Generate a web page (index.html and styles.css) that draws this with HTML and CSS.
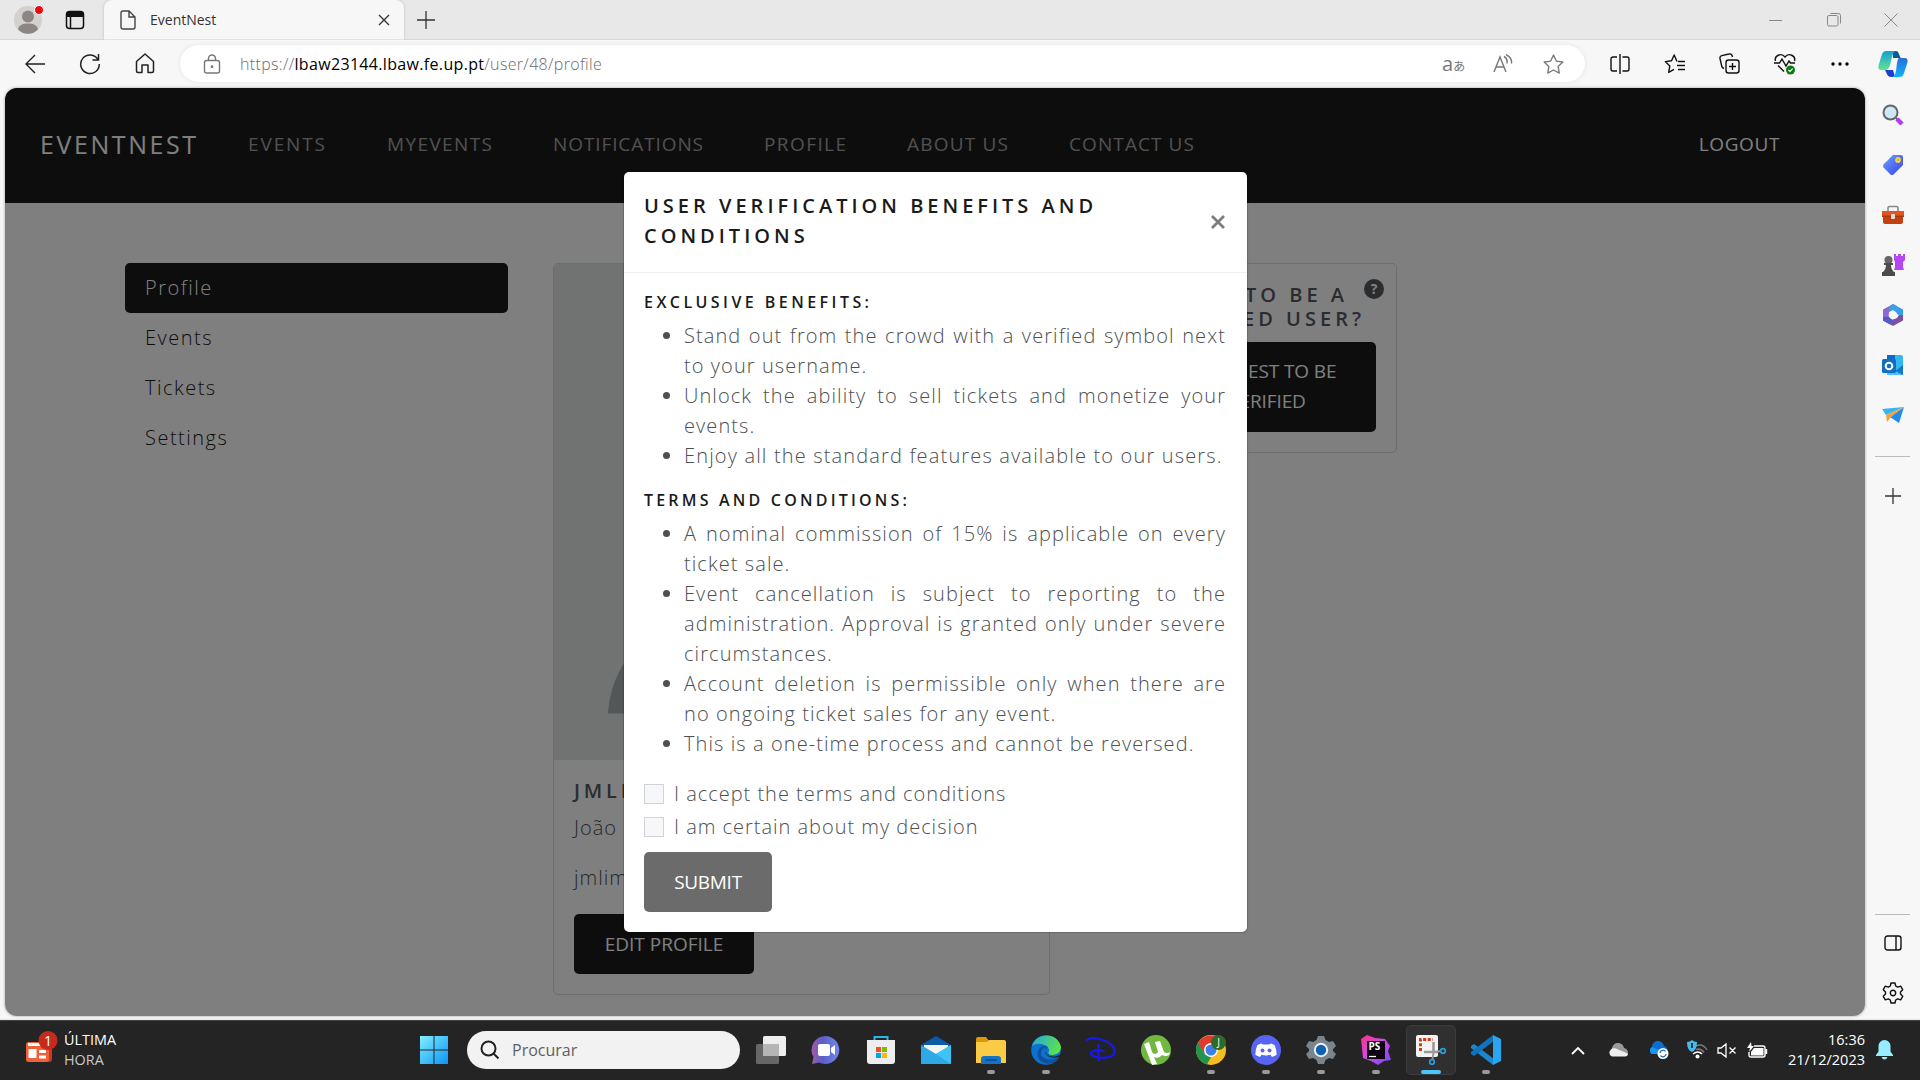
FILE: index.html
```html
<!DOCTYPE html>
<html lang="pt">
<head>
<meta charset="utf-8">
<title>EventNest</title>
<link rel="stylesheet" href="styles.css">
</head>
<body>
<div class="browser">
  <header class="tabstrip">
    <div class="avatar-cell"><svg width="30" height="30" viewBox="0 0 30 30"><circle cx="15" cy="15" r="14" fill="#d3d1cd"/><circle cx="15" cy="11.500" r="6" fill="#8b8683"/><path d="M5 24.500c1-5 5-6 10-6s9 1 10 6a14 14 0 0 1-20 0z" fill="#8b8683"/><circle cx="26" cy="5" r="4.500" fill="#e80b12" stroke="#fff"/></svg></div>
    <svg class="workspace" width="20" height="20" viewBox="0 0 20 20" fill="none" stroke="#111" stroke-width="1.500"><rect x="1.500" y="1.500" width="17" height="17" rx="3"/><path d="M2 4.500h16" stroke-width="5"/><path d="M5.500 6v12"/></svg>
    <div class="tab">
      <svg width="16" height="20" viewBox="0 0 16 20" fill="none" stroke="#444" stroke-width="1.400"><path d="M3 1h6l6 6v10a2 2 0 0 1-2 2H3a2 2 0 0 1-2-2V3a2 2 0 0 1 2-2zM9 1v6h6"/></svg>
      <span class="tab-title">EventNest</span>
      <svg width="12" height="12" viewBox="0 0 12 12" stroke="#333" stroke-width="1.400"><path d="M1 1l10 10M11 1L1 11"/></svg>
    </div>
    <svg class="newtab" width="18" height="18" viewBox="0 0 18 18" stroke="#333" stroke-width="1.300"><path d="M9 0v18M0 9h18"/></svg>
    <div class="winctl">
      <svg width="14" height="14" viewBox="0 0 14 14" stroke="#888"><path d="M0 7.500h13"/></svg>
      <svg width="14" height="14" viewBox="0 0 14 14" fill="none" stroke="#888"><rect x=".5" y="2.500" width="10.500" height="10.500" rx="1.500"/><path d="M3.500.5h8a2 2 0 0 1 2 2v8"/></svg>
      <svg width="14" height="14" viewBox="0 0 14 14" stroke="#888"><path d="M.5.500l13 13M13.500.500l-13 13"/></svg>
    </div>
  </header>

  <div class="toolbar">
    <div class="tool"><svg width="20" height="20" viewBox="0 0 20 20" fill="none" stroke="#222" stroke-width="1.400"><path d="M20 10H1M10 1l-9 9 9 9"/></svg></div>
    <div class="tool"><svg width="22" height="22" viewBox="0 0 22 22" fill="none" stroke="#222" stroke-width="1.500"><path d="M19 6.500A9.300 9.300 0 1 0 20.300 11M19.500 1v6h-6"/></svg></div>
    <div class="tool"><svg width="20" height="21" viewBox="0 0 20 21" fill="none" stroke="#222" stroke-width="1.500" stroke-linejoin="round"><path d="M1.500 8.500L10 1l8.500 7.500V18a1.500 1.500 0 0 1-1.500 1.500h-4V12H7v7.500H3A1.500 1.500 0 0 1 1.500 18z"/></svg></div>
    <div class="address">
      <svg width="18" height="20" viewBox="0 0 18 20" fill="none" stroke="#777" stroke-width="1.400"><rect x="1.500" y="6.500" width="15" height="12.500" rx="2"/><path d="M5.500 6.500V4.500a3.500 3.500 0 0 1 7 0v2"/><circle cx="9" cy="12.700" r=".7" fill="#777"/></svg>
      <span class="url">https://<b>lbaw23144.lbaw.fe.up.pt</b>/user/48/profile</span>
      <div class="addr-tools">
        <span class="translate">a<i>あ</i></span>
        <svg width="20" height="20" viewBox="0 0 20 20" fill="none" stroke="#777" stroke-width="1.400"><path d="M1 18L7 3l6 15M3.200 13h7.600M11 2.500c2 1 3.500 4 3 7M13 .5c4 2 6 5 5.500 9"/></svg>
        <svg width="21" height="20" viewBox="0 0 20 19" fill="none" stroke="#777" stroke-width="1.300" stroke-linejoin="round"><path d="M10 1l2.700 5.700 6.200.9-4.500 4.300 1.100 6.200L10 15.200l-5.500 2.900 1.100-6.200L1.100 7.600l6.200-.9z"/></svg>
      </div>
    </div>
    <div class="right-tools">
      <div class="tool"><svg width="20" height="20" viewBox="0 0 20 20" fill="none" stroke="#111" stroke-width="1.400"><path d="M10 0v20M7 3H3a2 2 0 0 0-2 2v10a2 2 0 0 0 2 2h4M12.500 3H17a2 2 0 0 1 2 2v10a2 2 0 0 1-2 2h-4.500"/></svg></div>
      <div class="tool"><svg width="21" height="20" viewBox="0 0 21 20" fill="none" stroke="#111" stroke-width="1.400" stroke-linejoin="round"><path d="M13 7.500L10.200 1 7.500 6.700 1.300 7.600l4.500 4.300-1.100 6.500 5.300-3M14 7.500h7M13 11.500h8M14 15.500h7"/></svg></div>
      <div class="tool"><svg width="21" height="21" viewBox="0 0 21 21" fill="none" stroke="#111" stroke-width="1.400"><rect x="7" y="7" width="13" height="13" rx="2.500"/><path d="M13.500 10v7M10 13.500h7M5 15.500c-1-.3-2-1-2.300-2.500L1 5.500C.7 4 1.500 3 2.800 2.600L10 1c2-.5 3 .5 3.500 3"/></svg></div>
      <div class="tool"><svg width="22" height="22" viewBox="0 0 22 22" fill="none" stroke="#111" stroke-width="1.400"><path d="M1.500 8C0 3 7-1 11 4c4-5 11-1 9.500 4M0 10h5.500l2.500-4 4 7 3-5 1.500 2H21M4 12.500l6 6"/><circle cx="16.500" cy="17" r="4.500" fill="#0f7b0f" stroke="none"/><path d="M14.500 17l1.500 1.500 2.600-2.800" stroke="#fff" stroke-width="1.200"/></svg></div>
      <div class="tool"><svg width="18" height="6" viewBox="0 0 18 6"><circle cx="2" cy="3" r="1.700"/><circle cx="9" cy="3" r="1.700"/><circle cx="16" cy="3" r="1.700"/></svg></div>
    </div>
    <div class="copilot"><svg width="30" height="28" viewBox="0 0 30 28"><defs><linearGradient id="cp1" x1="0" y1="0" x2="0" y2="1"><stop offset="0" stop-color="#159fd8"/><stop offset="1" stop-color="#62e38e"/></linearGradient><linearGradient id="cp2" x1="0" y1="0" x2="0" y2="1"><stop offset="0" stop-color="#2b6fd8"/><stop offset="1" stop-color="#0fb3fa"/></linearGradient></defs><path d="M15 1h3c3 0 3 5 5 7h-8z" fill="#0a5c8c"/><path d="M7 20h8l2 7h-4c-4 0-4-4-6-7z" fill="#1b3fd0"/><path d="M8 1h10c-2 0-3 2-4 6l-2 8c-1 4-3 5-5 5H3c-3 0-3-3-2-6L4 4c1-2 2-3 4-3z" fill="url(#cp1)"/><path d="M22 8h5c3 0 3 3 2 6l-3 9c-1 3-2 4-5 4h-8c3 0 4-2 5-6l1-8c1-4 1-5 3-5z" fill="url(#cp2)"/></svg></div>
  </div>

  <div class="content">
    <div class="page">
      <nav class="navbar">
        <span class="brand">EVENTNEST</span>
        <a class="n1">EVENTS</a><a class="n2">MYEVENTS</a><a class="n3">NOTIFICATIONS</a><a class="n4">PROFILE</a><a class="n5">ABOUT US</a><a class="n6">CONTACT US</a>
        <a class="logout">LOGOUT</a>
      </nav>
      <main class="columns">
        <ul class="menu">
          <li class="active">Profile</li><li>Events</li><li>Tickets</li><li>Settings</li>
        </ul>
        <section class="card profile">
          <svg class="photo" viewBox="0 0 496 496"><path fill="#a6aeb0" d="M54 450c2-22 7-36 17-52 30-60 110-80 176-80s146 20 176 80c10 16 15 30 17 52zM248 80a95 95 0 1 1 0 190 95 95 0 0 1 0-190z"/></svg>
          <div class="card-body">
            <h4>JMLIMA</h4>
            <p>João Lima</p>
            <p class="mail">jmlima</p>
            <button class="btn">EDIT PROFILE</button>
          </div>
        </section>
        <section class="card verify">
          <h4><span class="line1">WANT TO BE A</span><span>VERIFIED USER?</span></h4>
          <span class="help">?</span>
          <button class="btn">REQUEST TO BE VERIFIED</button>
        </section>
      </main>
      <div class="backdrop">
        <div class="modal">
          <div class="modal-head">
            <h5>USER VERIFICATION BENEFITS AND CONDITIONS</h5>
            <svg width="14" height="14" viewBox="0 0 14 14" stroke="#7d7d7d" stroke-width="2.800"><path d="M1 1l12 12M13 1L1 13"/></svg>
          </div>
          <div class="modal-body">
            <h6 class="h-excl">EXCLUSIVE BENEFITS:</h6>
            <ul>
              <li>Stand out from the crowd with a verified symbol next to your username.</li>
              <li>Unlock the ability to sell tickets and monetize your events.</li>
              <li class="wide">Enjoy all the standard features available to our users.</li>
            </ul>
            <h6 class="h-terms">TERMS AND CONDITIONS:</h6>
            <ul>
              <li>A nominal commission of 15% is applicable on every ticket sale.</li>
              <li>Event cancellation is subject to reporting to the administration. Approval is granted only under severe circumstances.</li>
              <li>Account deletion is permissible only when there are no ongoing ticket sales for any event.</li>
              <li>This is a one-time process and cannot be reversed.</li>
            </ul>
            <div class="checks">
              <label><span class="box"></span>I accept the terms and conditions</label>
              <label><span class="box"></span>I am certain about my decision</label>
            </div>
            <button class="btn submit">SUBMIT</button>
          </div>
        </div>
      </div>
    </div>
    <aside class="side">
      <div class="s"><svg width="22" height="22" viewBox="0 0 22 22"><path d="M14 14l2.500 2.500" stroke="#666" stroke-width="2"/><path d="M15 15l5 5" stroke="#b63af0" stroke-width="4.500"/><circle cx="8.500" cy="8.500" r="7" fill="#cde8fa" stroke="#666" stroke-width="2"/></svg></div>
      <div class="s"><svg width="22" height="22" viewBox="0 0 22 22"><defs><linearGradient id="tg" x1="0" y1="0" x2="1" y2="1"><stop offset="0" stop-color="#6aa5fb"/><stop offset="1" stop-color="#3b3df0"/></linearGradient></defs><path d="M11 1h8q2 0 2 2v8L11.500 20.500q-1.500 1-3 0l-7-7q-1-1.500 0-3z" fill="url(#tg)"/><circle cx="16" cy="6" r="2" fill="#8bb" stroke="#ffd32a" stroke-width="1.800"/></svg></div>
      <div class="s"><svg width="24" height="20" viewBox="0 0 24 20"><path d="M7 6V3q0-1.500 1.500-1.500h7Q17 1.500 17 3v3" fill="none" stroke="#888" stroke-width="1.600"/><path d="M2 9h20v8q0 2-2 2H4q-2 0-2-2z" fill="#c2410f"/><path d="M1 6h22v6H1z" fill="#e2561c"/><path d="M1 10.500h22V12H1z" fill="#a8380c"/><rect x="10" y="9" width="4" height="5" rx="1" fill="#ddd"/></svg></div>
      <div class="s"><svg width="24" height="24" viewBox="0 0 24 24"><path d="M13 1h2v2h2V1h3v2h2V1h2v6l-2 2v5l1 3H13l1-3V9l-1-2z" fill="#b546f2"/><circle cx="7.500" cy="7" r="4" fill="#666"/><path d="M3 10h9v2h-2c0 3 1 5 3 7h1v4H1v-4h1c2-2 3-4 3-7H3z" fill="#4c4c4c"/></svg></div>
      <div class="s"><svg width="22" height="24" viewBox="0 0 22 24"><path d="M11 1L1 6.500v11l5 2.800L7 9l8-6z" fill="#8f69d3"/><path d="M11 1l10 5.500v8L15 11l-4-4-4 2V4z" fill="#37a0e4"/><path d="M21 12v5.500L11 23l-7-4 11-4 2-3z" fill="#7d4fa5"/><path d="M1 14v3.500l7 4 3-4-4-4z" fill="#515cc8"/><circle cx="11" cy="12" r="4" fill="#f7f7f7"/></svg></div>
      <div class="s"><svg width="22" height="22" viewBox="0 0 22 22"><path d="M6 1h13q2 0 2 2v18H5V2z" fill="#35b8f1"/><path d="M5 1h8v6H5z" fill="#0f6cbd"/><path d="M21 11L8 21h13z" fill="#1378c8"/><path d="M5 13l16 8H5z" fill="#4cc4f5"/><rect x="0" y="5" width="14" height="14" rx="1.500" fill="#0f6fc6"/><circle cx="7" cy="12" r="3.300" fill="none" stroke="#fff" stroke-width="2"/></svg></div>
      <div class="s"><svg width="22" height="18" viewBox="0 0 22 18"><path d="M0 3l22-2L4 9z" fill="#35b5f2"/><path d="M22 1L8 11l9 6z" fill="#1f8bf0"/><path d="M22 1L4 9l1 7 4-5z" fill="#f2a33a"/></svg></div>
      <div class="line"></div>
      <div class="s plus"><svg width="16" height="16" viewBox="0 0 16 16" stroke="#333" stroke-width="1.300"><path d="M8 0v16M0 8h16"/></svg></div>
      <div class="line low"></div>
      <div class="s panel"><svg width="18" height="16" viewBox="0 0 18 16" fill="none" stroke="#111" stroke-width="1.400"><rect x="1" y="1" width="16" height="14" rx="2.500"/><path d="M12 1v14"/></svg></div>
      <div class="s"><svg width="22" height="22" viewBox="-11 -11 22 22" fill="none" stroke="#111" stroke-width="1.400" stroke-linejoin="round"><path d="M-2-10h4l.7 3 2 1.200 3-1 2 3.500L7.500-1v2l2.200 2.300-2 3.500-3-1-2 1.200L2 10h-4l-.7-3-2-1.200-3 1-2-3.500L-7.500 1v-2l-2.200-2.300 2-3.500 3 1 2-1.200z"/><circle r="2.700"/></svg></div>
    </aside>
  </div>
</div>

<footer class="taskbar">
  <div class="news">
    <svg width="34" height="34" viewBox="0 0 34 34"><rect x="1" y="11" width="26" height="20" rx="3" fill="#c93a1c"/><rect x="1" y="11" width="23" height="20" rx="3" fill="#f0603a"/><path d="M3 13.500h15M14 20.500h7M14 26h7" stroke="#fff" stroke-width="3"/><rect x="3.500" y="18" width="8" height="9" fill="#fff"/><circle cx="23" cy="9.500" r="9.500" fill="#c42b1c"/><text x="23" y="14.500" text-anchor="middle" class="badge-num">1</text></svg>
    <div class="news-text"><span>ÚLTIMA</span><span class="dim">HORA</span></div>
  </div>
  <div class="t start"><svg width="30" height="30" viewBox="0 0 30 30"><defs><linearGradient id="wn" x1="0" y1="0" x2="1" y2="1"><stop offset="0" stop-color="#82f0ff"/><stop offset="1" stop-color="#0a94f5"/></linearGradient></defs><path d="M1 1h13.500v13.500H1zM15.500 1H29v13.500H15.500zM1 15.500h13.500V29H1zM15.500 15.500H29V29H15.500z" fill="url(#wn)"/></svg></div>
  <div class="search"><svg width="20" height="20" viewBox="0 0 20 20" fill="none" stroke="#222" stroke-width="2"><circle cx="8.500" cy="8.500" r="7"/><path d="M13.500 13.500l5 5"/></svg><span>Procurar</span></div>
  <div class="apps">
    <div class="t"><svg width="30" height="28" viewBox="0 0 30 28"><rect x="7" y="0" width="23" height="20" rx="1.500" fill="#ededed"/><rect x="0" y="8" width="23" height="20" rx="1.500" fill="#777" opacity=".8"/><path d="M7 8h16v12H7z" fill="#b5b5b5"/></svg></div>
    <div class="t"><svg width="30" height="30" viewBox="0 0 30 30"><defs><linearGradient id="ch" x1="0" y1="0" x2="1" y2="0"><stop offset="0" stop-color="#a05aa8"/><stop offset=".4" stop-color="#5b5fc7"/><stop offset="1" stop-color="#6f88ea"/></linearGradient></defs><path d="M15 1a14 14 0 1 1-7 26.500L1 29l1.500-7A14 14 0 0 1 15 1z" fill="url(#ch)"/><rect x="7" y="9" width="12" height="12" rx="2" fill="#fff"/><path d="M20 13l4-3v10l-4-3z" fill="#fff"/></svg></div>
    <div class="t"><svg width="30" height="30" viewBox="0 0 30 30"><path d="M8.500 6V2h13v4" fill="none" stroke="#29b6ea" stroke-width="2"/><path d="M1 5h28v21q0 3-3 3H4q-3 0-3-3z" fill="#eee"/><path d="M10 12h5v5h-5z" fill="#f25022"/><path d="M16 12h5v5h-5z" fill="#7fba00"/><path d="M10 18h5v5h-5z" fill="#00a4ef"/><path d="M16 18h5v5h-5z" fill="#ffb900"/></svg></div>
    <div class="t"><svg width="30" height="28" viewBox="0 0 30 28"><path d="M0 9L15 0l15 9v6H0z" fill="#0a5cab"/><path d="M3 9h24v10H3z" fill="#f4f4f4"/><path d="M0 9l15 9 15-9v19H0z" fill="#2fa8e6"/><path d="M30 9L15 18l15 10z" fill="#3cc5f4"/></svg></div>
    <div class="t run"><svg width="30" height="27" viewBox="0 0 30 27"><path d="M0 2q0-2 2-2h8l3 4v6H0z" fill="#d99a05"/><path d="M0 5h11l2-2h15q2 0 2 2v21H0z" fill="#fccb45"/><path d="M5 27v-5q0-3 3-3h14q3 0 3 3v5z" fill="#1572c4"/><path d="M9 23h12" stroke="#084d92" stroke-width="1.500"/></svg></div>
    <div class="t run"><svg width="30" height="30" viewBox="0 0 30 30"><defs><linearGradient id="eg" x1="0" y1="0" x2="1" y2=".4"><stop offset="0" stop-color="#21a5de"/><stop offset="1" stop-color="#5ce04f"/></linearGradient></defs><circle cx="15" cy="15" r="14.800" fill="#0b72cf"/><path d="M1 11C5-3 27-3 30 12c0 6-5 8-10 8-3-1-3-2-2-4 1-6-11-10-17-5z" fill="url(#eg)"/><path d="M10 20c-1-6 4-8 7-8-6-3-12 2-10 10 2 6 9 8 15 6 3-1 5-4 6-6-7 4-15 3-18-2z" fill="#10509c"/><path d="M18 12c-3 0-5 3-3 6 2 4 9 5 15 1v2l-2 1c-4 1-8 1-11-1-4-3-4-8 1-9z" fill="#232323"/></svg></div>
    <div class="t"><svg width="30" height="26" viewBox="0 0 30 26" fill="none" stroke="#1717ee" stroke-width="2.300" stroke-linecap="round"><path d="M1 3C4 0 10 1 15 2.500 23 5 29 9 28.500 15c-.5 6-12 7-20 4.500-4-1.500-5-3.500-2-5 3-1.500 8-1.500 11-.5M12.500 8v15"/></svg></div>
    <div class="t"><svg width="30" height="30" viewBox="0 0 30 30"><circle cx="15" cy="15" r="15" fill="#72b840"/><path d="M3 9l5-2 3 10q3 4 6 0l-3-10 5-1 4 11q3 2 6 0l-1 3q-3 2-7 0-3 4-8 2l3 7-5 1z" fill="#fff"/></svg></div>
    <div class="t run"><svg width="30" height="30" viewBox="0 0 30 30"><circle cx="15" cy="15" r="15" fill="#f4bd20"/><path d="M2 8A15 15 0 0 1 28 8H15l-6.500 11z" fill="#df3b30"/><path d="M2 7.500l7 12 6 2.500-4 7.500A15 15 0 0 1 2 7.500z" fill="#219550"/><circle cx="15" cy="15" r="7" fill="#fff"/><circle cx="15" cy="15" r="5.500" fill="#3d7eea"/><circle cx="22.500" cy="7.500" r="7.500" fill="#2e6b28"/><text x="22.500" y="11" text-anchor="middle" class="initial">J</text></svg></div>
    <div class="t run"><svg width="30" height="30" viewBox="0 0 30 30"><circle cx="15" cy="15" r="15" fill="#5865f2"/><path d="M10 8.500l2 1h6l2-1 3.500 1.500q2.500 5 2 10l-4.500 2-1.500-2.200q-4.500 1.200-9 0L9 22l-4.500-2q-.5-5 2-10z" fill="#fff"/><circle cx="11.500" cy="15.500" r="2" fill="#5865f2"/><circle cx="18.500" cy="15.500" r="2" fill="#5865f2"/></svg></div>
    <div class="t run"><svg width="30" height="30" viewBox="-15 -15 30 30"><path d="M-3-14h6l1.500 4L8-8l4-1 3 5-3 3v2l3 3-3 5-4-1-3.500 2L3 14h-6l-1.500-4L-8 8l-4 1-3-5 3-3v-2l-3-3 3-5 4 1 3.500-2z" fill="#7a848c"/><circle r="6.200" fill="#0f62b3" stroke="#eee" stroke-width="2"/></svg></div>
    <div class="t run"><svg width="30" height="30" viewBox="0 0 30 30"><defs><linearGradient id="ps" x1="0" y1="0" x2="1" y2="1"><stop offset="0" stop-color="#ff3185"/><stop offset=".45" stop-color="#d24ae8"/><stop offset="1" stop-color="#7247f5"/></linearGradient></defs><path d="M0 4L6 0l8 3 10 1 5 7-2 5 3 9-7 1-6 4-7-4-8-3z" fill="url(#ps)"/><path d="M6 6h18v18H6z" fill="#0b0410"/><text x="7.500" y="15" class="ps">PS</text><path d="M8 21.500h7" stroke="#fff" stroke-width="1.300"/></svg></div>
    <div class="t on"><svg width="30" height="30" viewBox="0 0 30 30"><rect x="0" y="0" width="22" height="22" rx="2" fill="#f3f3f3"/><path d="M4.500 16V4.500H17" fill="none" stroke="#d03c10" stroke-width="3" stroke-dasharray="3 1.700"/><path d="M8 17h14M17.500 7v11" stroke="#9a9a9a" stroke-width="2.600"/><path d="M17.500 18l-1 6M19 17l6-1" stroke="#9a9a9a" stroke-width="2"/><circle cx="16" cy="27" r="2.300" fill="none" stroke="#2a9fe0" stroke-width="1.700"/><circle cx="27" cy="16" r="2.300" fill="none" stroke="#2a9fe0" stroke-width="1.700"/></svg></div>
    <div class="t run"><svg width="30" height="30" viewBox="0 0 30 30"><path d="M0 11l3-2 20 15-1 6L0 13z" fill="#1c87d0"/><path d="M0 19l3 2L23 6l-1-6L0 17z" fill="#0f74bd"/><path d="M22 0l8 4v22l-8 4z" fill="#2aa5f0"/></svg></div>
  </div>
  <div class="tray">
    <div class="y up"><svg width="14" height="9" viewBox="0 0 14 9" fill="none" stroke="#fff" stroke-width="1.800"><path d="M1 8l6-6 6 6"/></svg></div>
    <div class="y c1"><svg width="21" height="14" viewBox="0 0 21 14"><path d="M4 7a6 6 0 0 1 12-2c4 1 4 4 4 5l-15-1z" fill="#9a9a9a"/><path d="M4 13.500a4 4 0 0 1-1-7c2-2 5-1 7 0l10 4c0 2-1 3-3 3z" fill="#eee"/></svg></div>
    <div class="y c2"><svg width="21" height="18" viewBox="0 0 21 18"><path d="M4 7a6 6 0 0 1 12-2c4 1 4 5 1 8H4a4 4 0 0 1 0-7z" fill="#0f6cd0"/><path d="M4 13a4 4 0 0 1 0-7l7 3v4z" fill="#1c93ee"/><circle cx="15" cy="12.500" r="5.500" fill="#fff"/><path d="M12 12a3 3 0 0 1 5.500-1.500M18 13a3 3 0 0 1-5.500 1.500" fill="none" stroke="#0f6cbd" stroke-width="1.300"/></svg></div>
    <div class="y wifi"><svg width="21" height="20" viewBox="0 0 21 20" fill="none"><path d="M9 6q7-3 11 4M9 9.500q5-1.500 8 3" stroke="#777" stroke-width="1.500"/><path d="M6 14q5-4 9 0" stroke="#fff" stroke-width="1.600"/><circle cx="10.500" cy="16.500" r="2" fill="#fff"/><path d="M0 2q3 0 5-2 2 2 5 2 0 8-5 10Q0 10 0 2z" fill="#4cb8ea"/><path d="M5 3v5" stroke="#123" stroke-width="1.600"/></svg></div>
    <div class="y mute"><svg width="20" height="15" viewBox="0 0 20 15" fill="none" stroke="#fff" stroke-width="1.300"><path d="M1 5v5h3l5 4V1L4 5zM12.500 4.500l6 6M18.500 4.500l-6 6"/></svg></div>
    <div class="y batt"><svg width="21" height="17" viewBox="0 0 21 17" fill="none" stroke="#fff" stroke-width="1.400"><path d="M7 4h9q2 0 2 2v7q0 2-2 2H4q-2 0-2-2v-3M19.500 7v5"/><path d="M7 6h9.500v7.500H4V10z" fill="#fff" stroke="none"/><path d="M4 0L0 6h3L2 10l5-6H4.500z" fill="#fff" stroke="none"/></svg></div>
    <div class="clock"><span>16:36</span><span>21/12/2023</span></div>
    <svg class="bell" width="17" height="20" viewBox="0 0 17 20"><path d="M8.500 0a6 6 0 0 1 6 6.500v5L17 15v1H0v-1l2.500-3.500v-5a6 6 0 0 1 6-6.500zM5.500 17h6q-1 2.500-3 2.500t-3-2.500z" fill="#99ebff"/></svg>
  </div>
</footer>
</body>
</html>
```
FILE: styles.css
```css
* { box-sizing: border-box; }
body { margin: 0; width: 1920px; height: 1080px; overflow: hidden; display: flex; flex-direction: column; background: #f7f7f7; font-family: "Open Sans", "Noto Sans", "Noto Sans CJK JP", sans-serif; }
svg { display: block; flex: none; }
h4, h5, h6, p, ul { margin: 0; padding: 0; font-weight: 500; }
ul { list-style: none; }
button { border: 0; font-family: inherit; }

.browser { height: 1020px; display: flex; flex-direction: column; border-bottom: 1px solid #e6e6e6; }

/* tab strip */
.tabstrip { height: 40px; background: #e8e8e8; border-bottom: 1px solid #d6d6d6; display: flex; align-items: center; padding-left: 13px; }
.workspace { margin-left: 22px; }
.tab { width: 300px; height: 40px; margin: 0 13px 0 19px; padding: 0 14px 0 16px; background: #f7f7f7; border-radius: 8px 8px 0 0; box-shadow: 0 0 3px #bbb; clip-path: inset(0 -4px); display: flex; align-items: center; }
.tab-title { margin-left: 14px; font-size: 14px; color: #333; flex: 1; }
.winctl { margin-left: auto; padding-right: 22px; display: flex; gap: 43.500px; }

/* toolbar */
.toolbar { height: 48px; display: flex; align-items: center; padding: 0 0 1px 7px; }
.tool { width: 55px; display: flex; align-items: center; justify-content: center; }
.address { width: 1405px; height: 37px; margin: 0 7px 0 8px; border-radius: 19px; background: #fff; box-shadow: 0 0 4px #e2e2e2; display: flex; align-items: center; padding: 0 21px 0 23px; }
.url { margin-left: 19px; font-size: 16px; letter-spacing: .33px; color: #6b6b6b; font-weight: 300; }
.url b { color: #000; font-weight: 400; }
.addr-tools { margin-left: auto; display: flex; align-items: center; gap: 30px; color: #777; }
.translate { font-size: 20px; line-height: 20px; width: 21px; display: flex; align-items: baseline; }
.translate i { font: 400 12px/12px "Noto Sans CJK JP", sans-serif; }
.right-tools { display: flex; }
.copilot { width: 52px; display: flex; justify-content: center; }

/* page frame */
.content { flex: 1; display: flex; min-height: 0; }
.page { position: relative; width: 1860px; height: 928px; margin-left: 5px; border-radius: 12px; overflow: hidden; background: #fff; box-shadow: 0 0 3px #999; color: #4c5053; font-size: 20px; font-weight: 340; }
.navbar { height: 115px; background: #1a1a1a; display: flex; align-items: center; padding: 0 85px 3px 35px; color: rgba(255,255,255,.6); font-size: 19px; font-weight: 400; line-height: 30px; }
.brand { width: 208px; color: #fff; font-size: 25px; letter-spacing: 2.570px; font-weight: 500; }
.n1 { width: 139px; letter-spacing: 1.870px; }
.n2 { width: 166px; letter-spacing: 1.380px; }
.n3 { width: 211px; letter-spacing: .9px; }
.n4 { width: 143px; letter-spacing: 1.410px; }
.n5 { width: 162px; letter-spacing: 1.200px; }
.n6 { letter-spacing: 1.090px; }
.logout { margin-left: auto; color: #fff; letter-spacing: .6px; }

.columns { display: flex; align-items: flex-start; padding: 60px 0 0 120px; }
.menu { width: 383px; margin-right: 45px; color: #1a1a1a; }
.menu li { height: 50px; padding: 0 20px; line-height: 49px; letter-spacing: 1.500px; font-weight: 350; border-radius: 5px; }
.menu .active { background: #1a1a1a; color: #fff; }
.card { border: 1px solid #dadada; border-radius: 5px; overflow: hidden; }
.profile { width: 497px; height: 732px; }
.photo { width: 495px; height: 496px; background: #e1e6e4; }
.card-body { padding: 19px 20px; }
.card h4 { font-size: 20px; line-height: 24px; letter-spacing: 3.800px; color: #55595c; font-weight: 600; }
.card p { font-weight: 340; line-height: 30px; letter-spacing: 1px; margin-top: 10px; }
.card .mail { margin-top: 20px; }
.btn { display: block; height: 60px; background: #1a1a1a; color: #fff; font-size: 19px; line-height: 30px; border-radius: 5px; padding: 0; }
.profile .btn { width: 180px; margin-top: 21px; }
.verify { position: relative; width: 302px; height: 190px; margin-left: 45px; padding: 19px 20px; }
.verify h4 { display: flex; flex-direction: column; align-items: flex-end; letter-spacing: 4px; margin: 0 11px 11px -20px; white-space: nowrap; }
.line1 { padding-right: 17px; }
.verify .btn { width: 260px; height: 90px; padding: 14px 35px 16px 77px; letter-spacing: -.1px; }
.help { position: absolute; right: 12px; top: 15px; width: 20px; height: 20px; border-radius: 50%; background: #55595c; color: #fff; font-size: 14px; line-height: 20px; font-weight: 700; text-align: center; }

/* modal */
.backdrop { position: absolute; inset: 0; background: rgba(0,0,0,.5); padding: 84px 0 0 619px; }
.modal { width: 623px; height: 760px; background: #fff; border-radius: 5px; box-shadow: 0 0 1px 1px rgba(0,0,0,.18); }
.modal-head { height: 101px; border-bottom: 1px solid #eceeef; display: flex; align-items: center; justify-content: space-between; padding: 0 22px 0 20px; }
.modal-head h5 { width: 480px; color: #1a1a1a; font-size: 20px; line-height: 30px; letter-spacing: 4px; font-weight: 600; padding-bottom: 2px; }
.modal-body { padding: 19px 21px 20px 20px; }
.modal-body h6 { color: #1a1a1a; font-size: 16px; line-height: 20px; font-weight: 600; margin-bottom: 9px; }
.h-excl { letter-spacing: 3.450px; }
.h-terms { letter-spacing: 3.200px; margin-top: 19px; }
.modal-body ul { list-style: disc; padding-left: 40px; text-align: justify; line-height: 30px; letter-spacing: 1.080px; }
.modal-body li { font-weight: 340; }
.modal-body .wide { letter-spacing: 1.160px; }
.checks { margin: 18px 0 9px; }
.checks label { height: 33px; display: flex; align-items: center; gap: 10px; letter-spacing: .98px; }
.box { width: 20px; height: 20px; background: #f7f7f9; border: 1px solid #ced4da; }
.submit { width: 128px; background: #6b6b6b; letter-spacing: -.3px; }

/* browser sidebar */
.side { width: 55px; padding-top: 2px; display: flex; flex-direction: column; align-items: center; }
.s { height: 50px; display: flex; align-items: center; justify-content: center; }
.line { width: 35px; height: 1px; background: #bbb; margin-top: 16px; }
.plus { margin-top: 14px; }
.line.low { margin-top: 393px; }
.panel { margin-top: 3px; }

/* taskbar */
.taskbar { height: 60px; background: #242424; border-top: 1px solid #454545; display: flex; align-items: center; padding-bottom: 1px; color: #fff; }
.news { width: 406px; padding: 0 0 5px 25px; display: flex; align-items: center; gap: 5px; }
.news-text { display: flex; flex-direction: column; font-size: 14.400px; line-height: 20px; padding-top: 4px; }
.dim { color: #c8c8c8; }
.badge-num { font-size: 14px; fill: #fff; }
.t { position: relative; width: 55px; height: 50px; display: flex; align-items: center; justify-content: center; }
.search { width: 273px; height: 38px; margin: 0 3px 0 6px; border-radius: 19px; background: #f2f2f2; display: flex; align-items: center; gap: 12px; padding-left: 13px; color: #5f5f5f; font-size: 16px; }
.apps { display: flex; width: 801px; }
.t.run::after, .t.on::after { content: ""; position: absolute; bottom: 1px; left: 23.500px; width: 8px; height: 4px; border-radius: 2px; background: #9a9a9a; }
.t.on { width: 50px; margin: 0 2.500px; background: #303030; border: 1px solid #3c3c3c; border-radius: 5px; }
.t.on::after { left: 14px; width: 20px; bottom: 0; background: #4cc2ff; }
.initial { font-size: 10px; fill: #fff; }
.ps { font-size: 10px; font-weight: 700; fill: #fff; }
.tray { display: flex; align-items: center; padding-left: 14px; }
.y { display: flex; justify-content: center; align-items: center; width: 40px; }
.wifi, .mute { width: 30px; }
.wifi { margin-left: 4px; }
.batt { width: 30px; }
.clock { width: 93px; display: flex; flex-direction: column; text-align: right; font-size: 14.500px; line-height: 20px; }
.bell { margin-left: 11px; }
```
